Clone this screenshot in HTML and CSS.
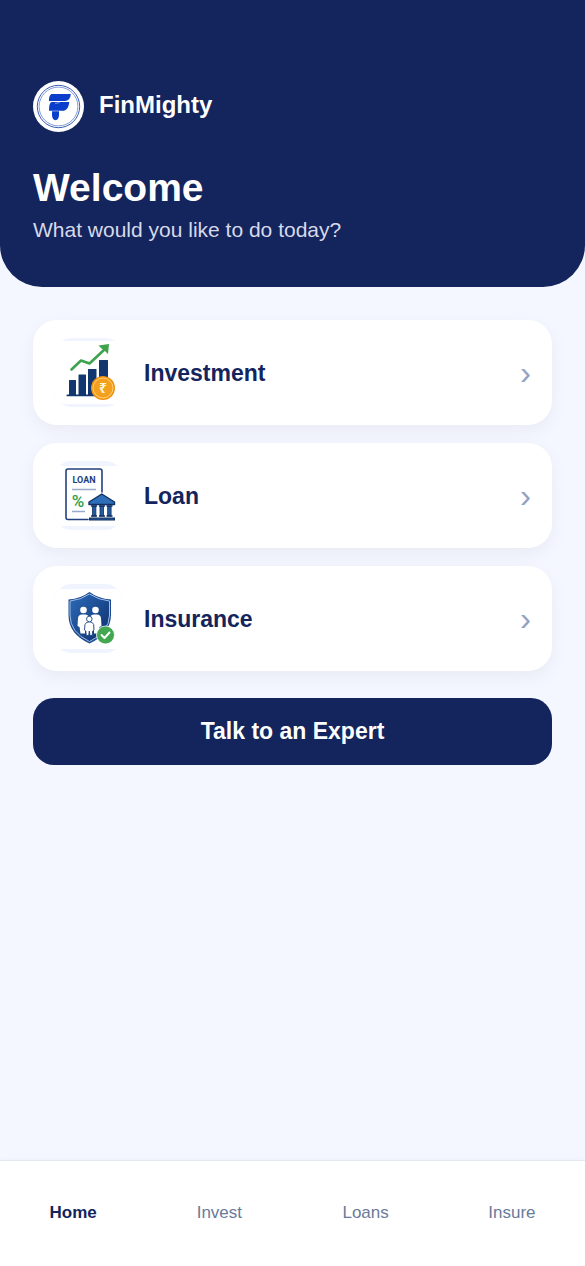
FILE: index.html
```html
<!DOCTYPE html>
<html lang="en">
<head>
    <meta charset="UTF-8">
    <meta name="viewport" content="width=device-width, initial-scale=1.0">
    <title>FinMighty</title>
    <link rel="stylesheet" href="styles.css">
</head>
<body>
    <!-- Header Section -->
    <header class="header">
        <div class="brand">
            <svg class="logo" viewBox="0 0 51 51" aria-hidden="true">
                <circle cx="25.500" cy="25.500" r="25.500" fill="#fff"/>
                <circle cx="25.500" cy="25.500" r="21.200" fill="none" stroke="#3a5cb8" stroke-width="1"/>
                <circle cx="25.500" cy="25.500" r="19.400" fill="none" stroke="#5f80d0" stroke-width="0.800"/>
                <path d="M18.500 13H37.800Q37.300 19.300 32.500 20H16Q15.700 14.500 18.500 13Z" fill="#0b3fcb"/>
                <path d="M18.500 21H36.300Q35.500 28.800 31 29.700H16Q15.800 22.500 18.500 21Z" fill="#0b3fcb"/>
                <path d="M19 30.200H26V34Q25.800 39 22.400 39.200Q19.200 39 19 34Z" fill="#0b3fcb"/>
                <path d="M22 22.300Q26 22.500 27.500 20.500" fill="none" stroke="#fff" stroke-width="0.500"/>
            </svg>
            <span class="brand-name">FinMighty</span>
        </div>
        <h1>Welcome</h1>
        <p>What would you like to do today?</p>
    </header>

    <!-- Services Section -->
    <main class="services">
        <a class="card" href="#invest">
            <span class="card-icon">
                <svg viewBox="0 0 69 63" aria-hidden="true">
                    <rect width="69" height="63" fill="#fff"/>
                    <g fill="#12366f">
                        <rect x="15" y="39" width="7" height="16" rx="0.500"/>
                        <rect x="24.500" y="33.500" width="7.500" height="21.500" rx="0.500"/>
                        <rect x="34" y="28" width="8.500" height="27" rx="0.500"/>
                        <rect x="45" y="19" width="9" height="36" rx="0.500"/>
                        <rect x="12.500" y="53.500" width="30" height="1.800" rx="0.900"/>
                    </g>
                    <path d="M17.500 28.500L27 19.500L35.500 22.500L50.500 8.500" fill="none" stroke="#3fa34d" stroke-width="2.600" stroke-linecap="round" stroke-linejoin="round"/>
                    <path d="M44.500 4.500L55 3L54 13L50.500 9.500L47.500 7.500Z" fill="#3fa34d"/>
                    <circle cx="49" cy="47" r="12" fill="#f0920f"/>
                    <circle cx="49" cy="47" r="10" fill="#f3a01f" stroke="#ffd27a" stroke-width="1"/>
                    <text class="rupee" x="49" y="52" text-anchor="middle">₹</text>
                </svg>
            </span>
            <span class="card-title">Investment</span>
            <span class="chevron" aria-hidden="true">›</span>
        </a>

        <a class="card" href="#loans">
            <span class="card-icon">
                <svg viewBox="0 0 69 60" aria-hidden="true">
                    <rect width="69" height="60" fill="#fff"/>
                    <path d="M34 53.500H14Q12 53.500 12 51.500V5Q12 3 14 3H46Q48 3 48 5V26" fill="none" stroke="#22407f" stroke-width="1.600" stroke-linecap="round"/>
                    <text class="loan" x="30" y="17" text-anchor="middle">LOAN</text>
                    <path d="M18 23.500H42M18 45.500H31" stroke="#9aabc9" stroke-width="1.600"/>
                    <text class="percent" x="24" y="41" text-anchor="middle">%</text>
                    <path d="M35 36V38.500H60.500V36L47.800 28Z" fill="#2f6fb7" stroke="#123063" stroke-width="1.400" stroke-linejoin="round"/>
                    <g fill="#215a9f" stroke="#123063" stroke-width="0.800">
                        <rect x="38.500" y="40" width="3.400" height="10"/>
                        <rect x="46" y="40" width="3.600" height="10"/>
                        <rect x="53.700" y="40" width="3.400" height="10"/>
                    </g>
                    <path d="M37 40H43M45 40H51M52.500 40H58.500M37 50H43M45 50H51M52.500 50H58.500" stroke="#123063" stroke-width="1.300"/>
                    <path d="M35 53H61" stroke="#123063" stroke-width="3"/>
                    <path d="M36.500 53H59.500" stroke="#2f6fb7" stroke-width="0.700"/>
                </svg>
            </span>
            <span class="card-title">Loan</span>
            <span class="chevron" aria-hidden="true">›</span>
        </a>

        <a class="card" href="#insure">
            <span class="card-icon">
                <svg viewBox="0 0 69 60" aria-hidden="true">
                    <defs>
                        <linearGradient id="shield" x1="0" y1="0" x2="1" y2="1">
                            <stop offset="0" stop-color="#2d6bb8"/>
                            <stop offset="1" stop-color="#0c2d6b"/>
                        </linearGradient>
                    </defs>
                    <rect width="69" height="60" fill="#fff"/>
                    <path d="M35.500 3Q44 9.500 57 10.500V26Q56.500 45 35.500 54.500Q14.500 45 14.500 26V10.500Q27 9.500 35.500 3Z" fill="#1d4a8f"/>
                    <path d="M35.500 5Q44.500 11 55.500 12V26Q55 43.500 35.500 52.500Q16 43.500 16 26V12Q26.500 11 35.500 5Z" fill="url(#shield)" stroke="#9fc0e8" stroke-width="1"/>
                    <g fill="#fff">
                        <circle cx="29.500" cy="21" r="3.300"/>
                        <circle cx="41.500" cy="21" r="3.300"/>
                        <path d="M24 29Q24.500 25.500 28 25.500H31Q34.500 25.500 35.500 29Q36.500 25.500 40 25.500H43Q46.500 25.500 47 29L47.500 37L45.500 38L44.500 44.500H40V36H31V44.500H26.500L25.500 38L23.500 37Z"/>
                    </g>
                    <g fill="#fff" stroke="#1b4687" stroke-width="0.900">
                        <path d="M31 35.500Q32 32.800 35.300 32.800Q38.800 32.800 39.700 35.500L40 41L38.700 42L38.200 46.500H36L35.300 42L34.700 46.500H32.300L31.800 42L30.500 41Z"/>
                        <circle cx="35.300" cy="30" r="2.800"/>
                    </g>
                    <circle cx="51.500" cy="46" r="9" fill="#43a752" stroke="#fff" stroke-width="0.800"/>
                    <path d="M47.500 46L50.500 49L55.500 43.500" fill="none" stroke="#fff" stroke-width="1.900" stroke-linecap="round" stroke-linejoin="round"/>
                </svg>
            </span>
            <span class="card-title">Insurance</span>
            <span class="chevron" aria-hidden="true">›</span>
        </a>

        <button type="button" class="btn">Talk to an Expert</button>
    </main>

    <!-- Bottom Navigation -->
    <nav class="bottom-nav">
        <a class="active" href="#home">Home</a>
        <a href="#invest">Invest</a>
        <a href="#loans">Loans</a>
        <a href="#insure">Insure</a>
    </nav>
</body>
</html>
```
FILE: styles.css
```css
/* General Styling */
* {
    margin: 0;
    padding: 0;
    box-sizing: border-box;
}

body {
    min-height: 100vh;
    display: flex;
    flex-direction: column;
    font-family: "Liberation Sans", Arial, sans-serif;
    background: #f4f7ff;
    color: #14245c;
}

a {
    color: inherit;
    text-decoration: none;
}

/* Header Styling */
.header {
    padding: 81px 33px 43px;
    background: #14245c;
    color: white;
    border-radius: 0 0 42px 42px;
}

.brand {
    display: flex;
    align-items: center;
    gap: 15px;
    margin-bottom: 33px;
}

.logo {
    width: 51px;
    height: 51px;
}

.brand-name {
    font-size: 24px;
    line-height: 28px;
    font-weight: bold;
    padding-bottom: 3px;
}

.header h1 {
    font-size: 39px;
    line-height: 45px;
    margin-bottom: 6px;
}

.header p {
    font-size: 21px;
    line-height: 28px;
    color: #d6daea;
}

/* Service Cards */
.services {
    flex: 1;
    display: flex;
    flex-direction: column;
    gap: 18px;
    padding: 33px;
}

.card {
    display: flex;
    align-items: center;
    gap: 21px;
    padding: 18px 21px;
    background: white;
    border-radius: 24px;
    box-shadow: 0 6px 18px rgba(0, 0, 0, 0.05);
}

.card-icon {
    width: 69px;
    height: 69px;
    display: flex;
    align-items: center;
    background: #eff4fe;
    border-radius: 18px;
    overflow: hidden;
}

.card-icon svg {
    width: 100%;
}

.rupee {
    font-family: "Noto Sans", "DejaVu Sans", sans-serif;
    font-size: 14px;
    font-weight: bold;
    fill: #fff4d6;
}

.loan {
    font-family: Roboto, sans-serif;
    font-size: 9px;
    font-weight: bold;
    fill: #1d3f80;
}

.percent {
    font-family: Roboto, sans-serif;
    font-size: 17px;
    font-weight: 500;
    fill: #2f9e44;
}

.card-title {
    flex: 1;
    font-size: 23px;
    line-height: 26px;
    font-weight: bold;
}

.chevron {
    font-size: 33px;
    line-height: 38px;
    color: #94a3c4;
}

/* Button Styling */
.btn {
    margin-top: 9px;
    padding: 20px;
    background: #14245c;
    color: white;
    border: none;
    border-radius: 21px;
    font-family: inherit;
    font-size: 23px;
    line-height: 27px;
    font-weight: bold;
    cursor: pointer;
}

/* Bottom Navigation */
.bottom-nav {
    display: flex;
    padding: 42px 0 44px;
    background: white;
    border-top: 1px solid #e5e9f2;
    box-shadow: 0 -1px 4px rgba(0, 0, 0, 0.03);
}

.bottom-nav a {
    flex: 1;
    text-align: center;
    font-size: 17px;
    line-height: 19px;
    color: #6b7a99;
}

.bottom-nav .active {
    color: #14245c;
    font-weight: bold;
}
```
